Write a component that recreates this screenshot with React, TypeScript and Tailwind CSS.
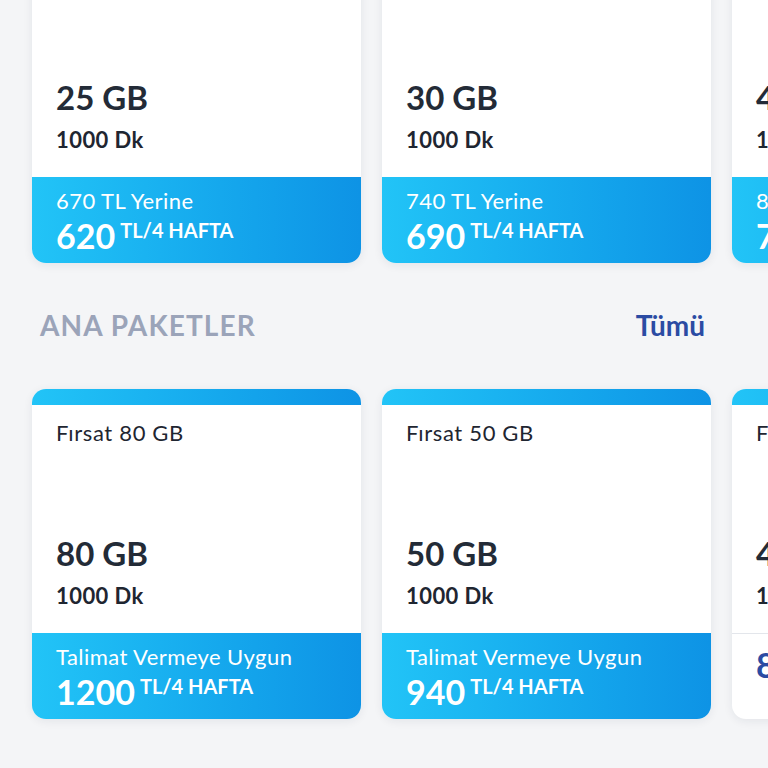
type Pkg = {
  title: string;
  gb: string;
  dk: string;
  note: string;
  price: string;
  plain?: boolean;
};

const topRow: Pkg[] = [
  { title: "Fırsat 25 GB", gb: "25 GB", dk: "1000 Dk", note: "670 TL Yerine", price: "620" },
  { title: "Fırsat 30 GB", gb: "30 GB", dk: "1000 Dk", note: "740 TL Yerine", price: "690" },
  { title: "Fırsat 40 GB", gb: "40 GB", dk: "1000 Dk", note: "800 TL Yerine", price: "750" },
];

const mainRow: Pkg[] = [
  { title: "Fırsat 80 GB", gb: "80 GB", dk: "1000 Dk", note: "Talimat Vermeye Uygun", price: "1200" },
  { title: "Fırsat 50 GB", gb: "50 GB", dk: "1000 Dk", note: "Talimat Vermeye Uygun", price: "940" },
  { title: "Fırsat 40 GB", gb: "40 GB", dk: "1000 Dk", note: "", price: "850", plain: true },
];

function PackageCard({ pkg }: { pkg: Pkg }) {
  return (
    <div className="w-[329px] shrink-0 rounded-[14px] overflow-hidden bg-white shadow-[0_2px_10px_rgba(30,40,60,0.08)]">
      <div className="h-[16px] bg-gradient-to-r from-[#22c4f7] to-[#0e93e5]" />
      <div className="h-[228px] px-6 pt-[14px] pb-[22px] flex flex-col justify-between text-[#1f2631]">
        <div className="text-[22px] leading-[28px] tracking-[0.03em]">{pkg.title}</div>
        <div className="flex flex-col">
          <div className="text-[33px] leading-[40px] font-bold text-[#232b37]">{pkg.gb}</div>
          <div className="text-[22px] leading-[30px] font-bold tracking-[0.02em] mt-[8px]">{pkg.dk}</div>
        </div>
      </div>
      {pkg.plain ? (
        <div className="h-[86px] px-6 pt-[10px] border-t border-[#e3e6eb] text-[#2b4ba3]">
          <div className="text-[22px] leading-[28px] tracking-[0.02em]">{pkg.note}</div>
          <div className="flex items-start mt-[2px]">
            <span className="text-[34px] leading-[38px] font-bold">{pkg.price}</span>
            <span className="text-[20px] leading-[24px] font-bold ml-[5px] mt-[1px]">TL/4 HAFTA</span>
          </div>
        </div>
      ) : (
        <div className="h-[86px] px-6 pt-[10px] bg-gradient-to-r from-[#22c4f7] to-[#0e93e5] text-white">
          <div className="text-[22px] leading-[28px] tracking-[0.02em]">{pkg.note}</div>
          <div className="flex items-start mt-[2px]">
            <span className="text-[34px] leading-[38px] font-bold">{pkg.price}</span>
            <span className="text-[20px] leading-[24px] font-bold ml-[5px] mt-[1px]">TL/4 HAFTA</span>
          </div>
        </div>
      )}
    </div>
  );
}

export default function App() {
  return (
    <div
      className="w-[768px] h-[768px] overflow-hidden bg-[#f4f5f7] flex flex-col"
      style={{ fontFamily: "Lato, 'Noto Sans', sans-serif" }}
    >
      <div className="-mt-[67px] flex gap-[21px] pl-[32px]">
        {topRow.map((p) => (
          <PackageCard key={p.gb} pkg={p} />
        ))}
      </div>
      <div className="h-[126px] shrink-0 flex items-center justify-between pl-[40px] pr-[63px] pb-[2px]">
        <span className="text-[28px] font-bold tracking-[0.04em] text-[#9ba4b9]">ANA PAKETLER</span>
        <span className="text-[28px] font-bold text-[#2b4ba3]">Tümü</span>
      </div>
      <div className="flex gap-[21px] pl-[32px]">
        {mainRow.map((p) => (
          <PackageCard key={p.gb} pkg={p} />
        ))}
      </div>
    </div>
  );
}
